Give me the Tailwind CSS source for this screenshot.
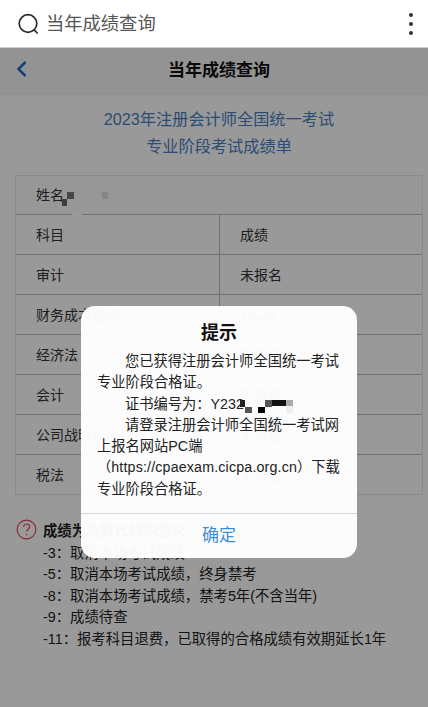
<!DOCTYPE html>
<html lang="zh-CN">
<head>
  <meta charset="UTF-8" />
  <meta name="viewport" content="width=device-width, initial-scale=1.0"/>
  <title>当年成绩查询</title>
  <script src="https://cdn.jsdelivr.net/npm/@tailwindcss/browser@4"></script>
</head>
<body class="w-[428px] h-[707px] overflow-hidden bg-white text-[#111] font-['Liberation_Sans','Noto_Sans_CJK_SC',sans-serif]">

  <!-- Browser bar -->
  <header class="h-[48px] flex items-center pl-[17px] pr-[13px] bg-white border-b border-[#d0d0d0]">
    <svg class="w-[22px] h-[22px] mr-[7px]" viewBox="0 0 22 22" fill="none" stroke="#2a2a2a" stroke-width="1.7" stroke-linecap="round">
      <circle cx="11" cy="10.5" r="8.8"/>
      <path d="M17.2 16.8l3 3.2"/>
    </svg>
    <span class="text-[18.3px] text-[#555] leading-none pt-[2px]">当年成绩查询</span>
    <div class="ml-auto flex flex-col gap-[5px] w-[8px] items-center">
      <i class="block w-[4px] h-[4px] rounded-full bg-[#333]"></i>
      <i class="block w-[4px] h-[4px] rounded-full bg-[#333]"></i>
      <i class="block w-[4px] h-[4px] rounded-full bg-[#333]"></i>
    </div>
  </header>

  <div class="relative h-[659px] overflow-hidden bg-white">

    <!-- Page nav -->
    <nav class="relative h-[45px] flex items-center justify-center pl-[10px] bg-[#f5f5f5] shadow-[0_1px_4px_rgba(0,0,0,0.12)]">
      <svg class="absolute left-[16px] top-[12px] w-[12px] h-[18px]" viewBox="0 0 12 18" fill="none" stroke="#1f6fc0" stroke-width="2.5">
        <path d="M9.5 2L2.5 9l7 7"/>
      </svg>
      <span class="text-[17px] font-bold text-[#111]">当年成绩查询</span>
    </nav>

    <!-- Heading -->
    <div class="pt-[13px] pl-[10px] text-center text-[16.2px] leading-[27px] text-[#4a7fc0]">
      <p>2023年注册会计师全国统一考试</p>
      <p>专业阶段考试成绩单</p>
    </div>

    <!-- Score table -->
    <div class="relative mt-[15px] ml-[15px] mr-[5px] border border-[#e8e8e8] text-[14px] text-[#333]">
      <div class="h-[39px] flex items-center pl-[20px] border-b border-[#bdbdbd] bg-[#fcfcfc]">姓名</div>
      <i class="absolute left-[51px] top-[16px] w-[7px] h-[7px] bg-[#777]"></i>
      <i class="absolute left-[46px] top-[23px] w-[5px] h-[7px] bg-[#666]"></i>
      <i class="absolute left-[86px] top-[16px] w-[6px] h-[7px] bg-[#e0e0e0]"></i>
      <i class="absolute left-[56px] top-[37px] w-[10px] h-[2px] bg-white"></i>
      <div class="grid grid-cols-[204px_1fr]">
        <div class="h-[40px] flex items-center pt-[2px] pl-[20px] border-b border-r border-[#bdbdbd]">科目</div>
        <div class="h-[40px] flex items-center pt-[2px] pl-[20px] border-b border-[#bdbdbd]">成绩</div>
        <div class="h-[40px] flex items-center pt-[2px] pl-[20px] border-b border-r border-[#bdbdbd]">审计</div>
        <div class="h-[40px] flex items-center pt-[2px] pl-[20px] border-b border-[#bdbdbd]">未报名</div>
        <div class="h-[40px] flex items-center pt-[2px] pl-[20px] border-b border-r border-[#bdbdbd]">财务成本管理</div>
        <div class="h-[40px] flex items-center pt-[2px] pl-[20px] border-b border-[#bdbdbd]">70.25</div>
        <div class="h-[40px] flex items-center pt-[2px] pl-[20px] border-b border-r border-[#bdbdbd]">经济法</div>
        <div class="h-[40px] flex items-center pt-[2px] pl-[20px] border-b border-[#bdbdbd]">未报名</div>
        <div class="h-[40px] flex items-center pt-[2px] pl-[20px] border-b border-r border-[#bdbdbd]">会计</div>
        <div class="h-[40px] flex items-center pt-[2px] pl-[20px] border-b border-[#bdbdbd]">未报名</div>
        <div class="h-[40px] flex items-center pt-[2px] pl-[20px] border-b border-r border-[#bdbdbd]">公司战略与风险管理</div>
        <div class="h-[40px] flex items-center pt-[2px] pl-[20px] border-b border-[#bdbdbd]">未报名</div>
        <div class="h-[39px] flex items-center pt-[2px] pl-[20px] border-r border-[#bdbdbd]">税法</div>
        <div class="h-[39px] flex items-center pt-[2px] pl-[20px]">未报名</div>
      </div>
    </div>

    <!-- Negative code notes -->
    <div class="relative mt-[26px] pl-[43px] text-[14.35px] leading-[21.6px] text-[#222]">
      <svg class="absolute left-[16px] top-[-2px] w-[21px] h-[21px]" viewBox="0 0 21 21" fill="none" stroke="#e8455f" stroke-width="1.2">
        <circle cx="10.5" cy="10.5" r="9.4"/>
        <path d="M7.6 8c0-1.8 1.3-3 3-3s3 1.1 3 2.8c0 2.4-3 2.5-3 5"/>
        <path d="M10.6 15v1.2"/>
      </svg>
      <p class="font-semibold">成绩为负数代码的含义：</p>
      <p>-3：取消本场考试成绩</p>
      <p>-5：取消本场考试成绩，终身禁考</p>
      <p>-8：取消本场考试成绩，禁考5年(不含当年)</p>
      <p>-9：成绩待查</p>
      <p>-11：报考科目退费，已取得的合格成绩有效期延长1年</p>
    </div>

    <!-- Dim layer -->
    <div class="absolute inset-0 bg-black/40"></div>

    <!-- Dialog -->
    <div class="absolute left-[81px] top-[258px] w-[276px] h-[252px] flex flex-col rounded-[14px] bg-white/[0.97]">
      <h2 class="pt-[14px] text-center text-[18px] leading-[27px] font-bold text-[#111]">提示</h2>
      <div class="px-[16px] pt-[4px] text-[14.27px] leading-[21.3px] text-[#222]">
        <p class="indent-[28px]">您已获得注册会计师全国统一考试专业阶段合格证。</p>
        <p class="relative indent-[28px]">证书编号为：Y232
          <i class="absolute left-[143px] top-[6px] w-[5px] h-[7px] bg-[#222]"></i>
          <i class="absolute left-[148px] top-[13px] w-[7px] h-[6px] bg-[#555]"></i>
          <i class="absolute left-[161px] top-[13px] w-[7px] h-[6px] bg-black"></i>
          <i class="absolute left-[168px] top-[6px] w-[7px] h-[7px] bg-[#555]"></i>
          <i class="absolute left-[175px] top-[6px] w-[14px] h-[6px] bg-[#111]"></i>
          <i class="absolute left-[189px] top-[6px] w-[7px] h-[6px] bg-[#aaa]"></i>
          <i class="absolute left-[189px] top-[12px] w-[7px] h-[7px] bg-[#eee]"></i>
        </p>
        <p class="indent-[28px]">请登录注册会计师全国统一考试网上报名网站PC端（<span class="tracking-[0.15px]">https://cpaexam.cicpa.org.cn</span>）下载专业阶段合格证。</p>
      </div>
      <button class="mt-auto h-[45px] border-t border-[#d6d6d6] text-[17px] text-[#3f8fd6]">确定</button>
    </div>
  </div>
</body>
</html>
